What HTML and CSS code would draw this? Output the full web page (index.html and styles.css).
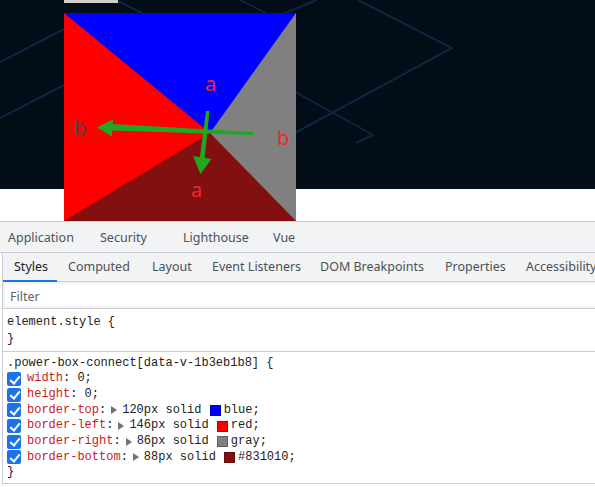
FILE: index.html
```html
<!DOCTYPE html>
<html>
<head>
<meta charset="utf-8">
<link rel="stylesheet" href="styles.css">
</head>
<body>
<div class="viewport">
  <svg class="bg-lines" width="595" height="189" viewBox="0 0 595 189">
    <g fill="none" stroke="#0e2540" stroke-width="2">
      <polyline points="358,0 452,48 280,141"/>
      <polyline points="290,89 373,135 356,143"/>
      <polyline points="280,15 317,0"/>
      <polyline points="0,62 70,26"/>
      <polyline points="0,118 70,82"/>
      <polyline points="116,0 142,13"/>
      <polyline points="240,0 266,13"/>
    </g>
  </svg>
  <div class="topbar"></div>
  <div class="box"></div>
  <svg class="notes" width="595" height="221" viewBox="0 0 595 221">
    <g fill="#1fa81f">
      <polygon points="253,132 112,124 112,130.5 253,135"/>
      <polygon points="97,127.5 113,119.5 112,136.5"/>
      <polygon points="206,111 209.5,111 204.5,160 199.5,160"/>
      <polygon points="200.5,174 193,156 211.5,159"/>
    </g>
    <text x="205" y="91" class="lbl lbl-red">a</text>
    <text x="74" y="135" class="lbl lbl-dark">b</text>
    <text x="277" y="145" class="lbl lbl-red">b</text>
    <text x="191" y="197" class="lbl lbl-red">a</text>
  </svg>
</div>

<div class="devtools">
  <div class="tabs-main">
    <span class="tab-main">Application</span>
    <span class="tab-main">Security</span>
    <span class="tab-main">Lighthouse</span>
    <span class="tab-main">Vue</span>
  </div>
  <div class="side">
    <div class="tabs-sub">
      <span class="tab-sub selected">Styles</span>
      <span class="tab-sub">Computed</span>
      <span class="tab-sub">Layout</span>
      <span class="tab-sub">Event Listeners</span>
      <span class="tab-sub">DOM Breakpoints</span>
      <span class="tab-sub">Properties</span>
      <span class="tab-sub">Accessibility</span>
    </div>
    <div class="filter-row">
      <div class="filter">Filter</div>
    </div>
    <div class="rule rule-first">
      <div class="line">element.style {</div>
      <div class="line">}</div>
    </div>
    <div class="rule rule-second">
      <div class="line">.power-box-connect[data-v-1b3eb1b8] {</div>
      <div class="line decl"><span class="cb"></span><span class="prop">width</span>: 0;</div>
      <div class="line decl"><span class="cb"></span><span class="prop">height</span>: 0;</div>
      <div class="line decl"><span class="cb"></span><span class="prop">border-top</span>:<span class="tri"></span>120px solid <span class="sw sw-blue"></span>blue;</div>
      <div class="line decl"><span class="cb"></span><span class="prop">border-left</span>:<span class="tri"></span>146px solid <span class="sw sw-red"></span>red;</div>
      <div class="line decl"><span class="cb"></span><span class="prop">border-right</span>:<span class="tri"></span>86px solid <span class="sw sw-gray"></span>gray;</div>
      <div class="line decl"><span class="cb"></span><span class="prop">border-bottom</span>:<span class="tri"></span>88px solid <span class="sw sw-maroon"></span>#831010;</div>
      <div class="line">}</div>
    </div>
  </div>
</div>
</body>
</html>
```
FILE: styles.css
```css
* { box-sizing: border-box; }
html, body { margin: 0; padding: 0; }
body {
  width: 595px;
  height: 487px;
  overflow: hidden;
  background: #fff;
  font-family: "Noto Sans", "Open Sans", sans-serif;
}
.viewport {
  position: relative;
  height: 221px;
  background: linear-gradient(#020d18 0, #020d18 189px, #ffffff 189px);
  padding: 13px 0 0 64px;
}
.bg-lines { position: absolute; left: 0; top: 0; }
.topbar {
  position: absolute;
  left: 64px; top: 0;
  width: 54px; height: 3px;
  background: #d3cfcc;
}
.box {
  position: relative;
  width: 0; height: 0;
  border-top: 120px solid blue;
  border-left: 146px solid red;
  border-right: 86px solid gray;
  border-bottom: 88px solid #831010;
}
.notes { position: absolute; left: 0; top: 0; }
.lbl { font-family: "Noto Sans", sans-serif; font-size: 20px; }
.lbl-red { fill: #f0262a; }
.lbl-dark { fill: #4b4650; }

.devtools { color: #202124; }
.tabs-main {
  height: 32px;
  border-top: 1px solid #cacdd1;
  border-bottom: 1px solid #cacdd1;
  background: #f1f3f4;
  display: grid;
  grid-template-columns: 92px 83px 90px auto;
  padding-left: 8px;
  align-items: center;
  font-size: 12.5px;
  color: #4d5156;
}
.side {
  margin-left: 2px;
  border-left: 1px solid #cacdd1;
}
.tabs-sub {
  height: 29px;
  background: #f1f3f4;
  border-bottom: 1px solid #cacdd1;
  display: grid;
  grid-template-columns: 54px 84px 60px 108px 125px 81px auto;
  font-size: 12.5px;
  color: #4d5156;
}
.tab-sub {
  padding-left: 11px;
  line-height: 28px;
  white-space: nowrap;
}
.tab-sub.selected {
  color: #202124;
  border-bottom: 2px solid #1a73e8;
  line-height: 26px;
  padding-top: 1px;
}
.filter-row {
  height: 27px;
  background: #f1f3f4;
  padding: 2px 0 2px 2px;
  border-bottom: 1px solid #cacdd1;
}
.filter {
  height: 100%;
  background: #fff;
  font-size: 12.5px;
  color: #5f6368;
  padding-left: 5px;
  padding-top: 2px;
  line-height: 22px;
}
.rule {
  border-bottom: 1px solid #cacdd1;
  font-family: "Liberation Mono", monospace;
  font-size: 12px;
  color: #222;
  padding-left: 4px;
}
.rule-first { height: 43px; padding-top: 5px; }
.rule-first .line { line-height: 17px; }
.rule-second { height: 132px; padding-top: 3.5px; }
.rule-second .line { line-height: 15.7px; height: 15.7px; white-space: pre; }
.decl { display: flex; align-items: center; }
.cb {
  position: relative;
  width: 14px; height: 14px;
  border-radius: 2px;
  background: #1a73e8;
  margin-right: 6px;
  flex: none;
}
.cb::after {
  content: "";
  position: absolute;
  left: 4.5px; top: 1.5px;
  width: 4px; height: 8px;
  border-right: 2px solid #fff;
  border-bottom: 2px solid #fff;
  transform: rotate(40deg);
}
.prop { color: #c5221f; }
.tri {
  width: 0; height: 0;
  border-left: 6px solid #727272;
  border-top: 4px solid transparent;
  border-bottom: 4px solid transparent;
  margin: 0 5px 0 5px;
  flex: none;
}
.sw {
  width: 11px; height: 11px;
  border: 1px solid rgba(0,0,0,0.25);
  margin: 0 3px 0 1px;
  flex: none;
}
.sw-blue { background: blue; }
.sw-red { background: red; }
.sw-gray { background: gray; }
.sw-maroon { background: #831010; }
```
